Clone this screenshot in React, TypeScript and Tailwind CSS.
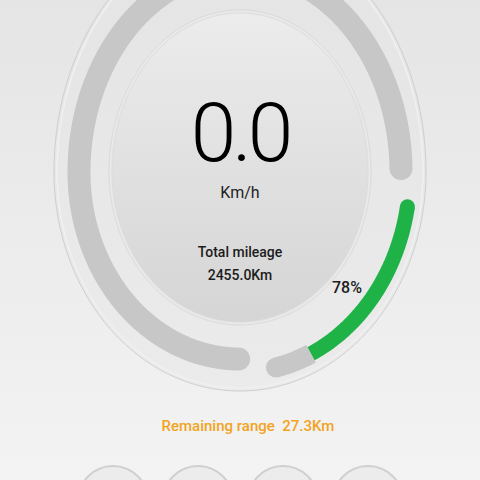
import React from 'react';

// egg shaped dial: top half and bottom half use different vertical radii
const CX = 240;
const CY = 172;

const eggPoint = (a: number, bt: number, bb: number, deg: number) => {
  const t = (deg * Math.PI) / 180;
  const c = Math.cos(t);
  return [CX + a * Math.sin(t), CY - (c > 0 ? bt : bb) * c];
};

const eggPath = (a: number, bt: number, bb: number, from: number, to: number, close = false) => {
  const steps = Math.max(12, Math.round(Math.abs(to - from) * 2));
  const pts: string[] = [];
  for (let i = 0; i <= steps; i++) {
    const [x, y] = eggPoint(a, bt, bb, from + ((to - from) * i) / steps);
    pts.push(`${i === 0 ? 'M' : 'L'}${x.toFixed(2)} ${y.toFixed(2)}`);
  }
  return pts.join(' ') + (close ? ' Z' : '');
};

const Dial: React.FC = () => {
  const greenTop = eggPoint(170, 200, 200, 100);
  const grayEnd = eggPoint(170, 200, 200, 167.8);

  return (
    <svg className="absolute inset-0" width="480" height="400" viewBox="0 0 480 400">
      <defs>
        <linearGradient id="disc" x1="0" y1="0" x2="0" y2="1">
          <stop offset="0" stopColor="#ececec" />
          <stop offset="1" stopColor="#d5d5d5" />
        </linearGradient>
        <linearGradient id="ring" x1="0" y1="0" x2="0" y2="1">
          <stop offset="0" stopColor="#e4e4e4" />
          <stop offset="1" stopColor="#ebebeb" />
        </linearGradient>
      </defs>

      {/* outer body */}
      <path d={eggPath(186, 244, 219, 0, 360, true)} fill="url(#ring)" stroke="#cdcdcd" strokeWidth="1" />
      <path d={eggPath(183, 241, 216, 0, 360, true)} fill="none" stroke="#f0f0f0" strokeWidth="1.5" />

      {/* main track */}
      <path d={eggPath(161, 203, 187, -179.5, 89)} fill="none" stroke="#c7c7c7" strokeWidth="23" strokeLinecap="round" />

      {/* battery track */}
      <path d={eggPath(170, 200, 200, 155.3, 167.8)} fill="none" stroke="#c7c7c7" strokeWidth="20" />
      <circle cx={grayEnd[0]} cy={grayEnd[1]} r="10" fill="#c7c7c7" />
      <path d={eggPath(170, 200, 200, 100, 155.3)} fill="none" stroke="#1fb247" strokeWidth="15" />
      <circle cx={greenTop[0]} cy={greenTop[1]} r="7.5" fill="#1fb247" />

      {/* inner disc */}
      <path d={eggPath(131, 162, 153, 0, 360, true)} fill="#e9e9e9" stroke="#dadada" strokeWidth="1" />
      <path d={eggPath(128, 159, 150, 0, 360, true)} fill="url(#disc)" stroke="#dcdcdc" strokeWidth="1" />
    </svg>
  );
};

export default function App() {
  return (
    <div className="h-[480px] w-[480px] overflow-hidden bg-gradient-to-b from-[#e5e5e5] to-[#f3f3f3] font-['Roboto',sans-serif]">
      <div className="relative h-[400px] w-full">
        <Dial />
        <div className="absolute inset-0 flex flex-col items-center text-[#111]">
          <div className="mt-[92px] text-[82px] leading-none font-light tracking-[-4px] text-black">0.0</div>
          <div className="mt-[11px] text-[16px] leading-none text-[#222]">Km/h</div>
          <div className="mt-[44px] text-[14px] leading-none font-medium text-[#1c1c1c]">Total mileage</div>
          <div className="mt-[9px] text-[14px] leading-none font-medium text-[#1c1c1c]">2455.0Km</div>
        </div>
        <div className="absolute left-[332px] top-[280px] text-[16px] leading-none font-medium text-[#1c1c1c]">78%</div>
      </div>

      <div className="mt-[19px] pl-[16px] text-center text-[15px] leading-none font-medium whitespace-pre text-[#f2a41e]">
        Remaining range  27.3Km
      </div>

      <div className="mt-[31px] flex justify-center gap-[13px]">
        <div className="h-[72px] w-[72px] rounded-full border-2 border-[#cfcfcf] bg-[#ececec]" />
        <div className="h-[72px] w-[72px] rounded-full border-2 border-[#cfcfcf] bg-[#ececec]" />
        <div className="h-[72px] w-[72px] rounded-full border-2 border-[#cfcfcf] bg-[#ececec]" />
        <div className="h-[72px] w-[72px] rounded-full border-2 border-[#cfcfcf] bg-[#ececec]" />
      </div>
    </div>
  );
}
